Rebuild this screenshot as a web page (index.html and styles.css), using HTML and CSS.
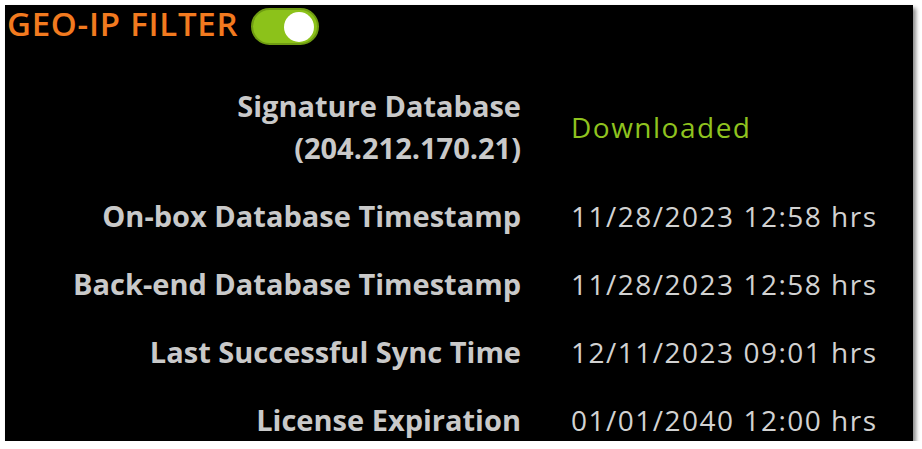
FILE: index.html
```html
<!DOCTYPE html>
<html>
<head>
<meta charset="utf-8">
<link rel="stylesheet" href="styles.css">
</head>
<body>
<div class="panel">
  <div class="header">
    <span class="title">GEO-IP FILTER</span>
    <span class="toggle"><span class="knob"></span></span>
  </div>
  <div class="grid">
    <div class="label">Signature Database<br>(204.212.170.21)</div>
    <div class="value ok">Downloaded</div>
    <div class="label">On-box Database Timestamp</div>
    <div class="value">11/28/2023 12:58 hrs</div>
    <div class="label">Back-end Database Timestamp</div>
    <div class="value">11/28/2023 12:58 hrs</div>
    <div class="label">Last Successful Sync Time</div>
    <div class="value">12/11/2023 09:01 hrs</div>
    <div class="label">License Expiration</div>
    <div class="value">01/01/2040 12:00 hrs</div>
  </div>
</div>
</body>
</html>
```
FILE: styles.css
```css
html, body {
  margin: 0;
  padding: 0;
  background: #ffffff;
}
.panel {
  margin: 5px 0 0 5px;
  width: 908px;
  height: 436px;
  background: #000;
  box-shadow: 3px 3px 4px rgba(0, 0, 0, 0.45);
}
.header {
  display: flex;
  align-items: flex-start;
  gap: 13px;
  height: 42px;
  padding-left: 2px;
}
.title {
  font-family: "Open Sans", sans-serif;
  font-weight: 600;
  font-size: 33px;
  letter-spacing: 0.75px;
  color: #f27a1f;
  line-height: 40px;
  margin-top: -1px;
}
.toggle {
  position: relative;
  margin-top: 3px;
  width: 64px;
  height: 33px;
  border-radius: 19px;
  background: #8cc21a;
  border: 2px solid #6f9c12;
  box-sizing: content-box;
}
.knob {
  position: absolute;
  right: 3px;
  top: 1.5px;
  width: 30px;
  height: 30px;
  border-radius: 50%;
  background: #fff;
}
.grid {
  display: grid;
  grid-template-columns: 516px auto;
  column-gap: 50px;
  row-gap: 26px;
  margin-top: 38px;
  align-items: center;
}
.label {
  text-align: right;
  font-family: "Open Sans", sans-serif;
  font-weight: 700;
  font-size: 29px;
  line-height: 42px;
  color: #c9c9c9;
}
.value {
  font-family: "Open Sans", sans-serif;
  font-size: 28px;
  letter-spacing: 1.5px;
  line-height: 42px;
  color: #d2d2d2;
}
.value.ok {
  color: #8fc31f;
}
```
